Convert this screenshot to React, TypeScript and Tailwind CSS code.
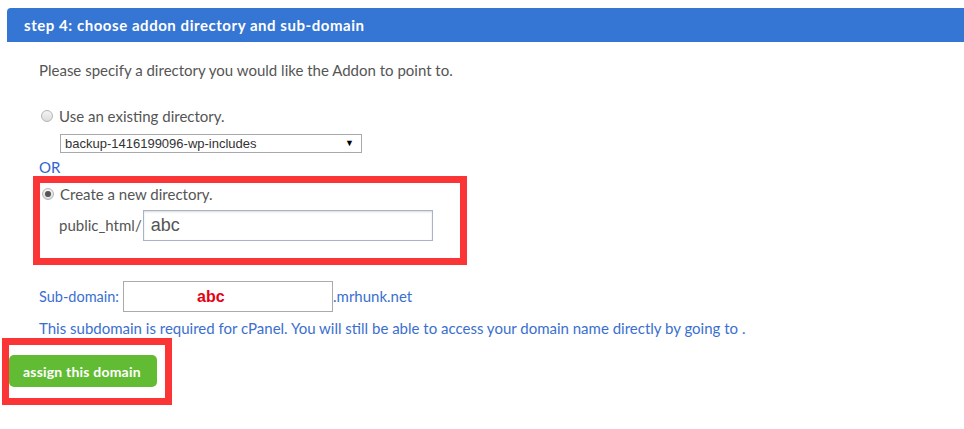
import React from 'react';

const lato = { fontFamily: 'Lato, "Open Sans", sans-serif' };
const arial = { fontFamily: '"Liberation Sans", Arial, sans-serif' };

const Radio: React.FC<{ checked?: boolean }> = ({ checked }) => (
  <span className="inline-flex h-[12px] w-[12px] shrink-0 items-center justify-center rounded-full border border-[#b5b5b5] bg-gradient-to-b from-[#f4f4f4] to-[#dcdcdc]">
    {checked && <span className="h-[6px] w-[6px] rounded-full bg-[#555]" />}
  </span>
);

const App: React.FC = () => {
  return (
    <div className="h-[429px] w-[964px] overflow-hidden bg-white pt-2 text-[15px] text-[#555]" style={lato}>
      <div className="ml-[7px] flex h-[34px] items-center rounded-tl-[4px] bg-[#3575d3] pl-[17px] text-[15px] font-bold tracking-[0.55px] text-white">
        step 4: choose addon directory and sub-domain
      </div>

      <div className="pl-[39px]">
        <p className="mt-[18px] leading-5">Please specify a directory you would like the Addon to point to.</p>

        <div className="mt-[26px] flex items-center gap-[6px] pl-[2px] leading-5">
          <Radio />
          <span>Use an existing directory.</span>
        </div>
        <div className="ml-[21px] mt-[8px] flex h-[19px] w-[302px] items-center justify-between border border-[#a9a9a9] bg-white pl-[4px] pr-[7px] text-[13px] text-[#333]" style={arial}>
          <span>backup-1416199096-wp-includes</span>
          <span className="text-[9px] text-black">▼</span>
        </div>
        <div className="mt-[5px] leading-[18px] text-[#3366cc]">OR</div>

        <div className="ml-[-6px] h-[89px] w-[434px] border-[7px] border-[#fb3535] pl-[2px] pt-[1px]">
          <div className="flex items-center gap-[6px] leading-5">
            <Radio checked />
            <span>Create a new directory.</span>
          </div>
          <div className="mt-[6px] flex items-center pl-[17px]">
            <span>public_html/</span>
            <div className="ml-[1px] flex h-[31px] w-[290px] items-center border border-[#a7b3c8] pl-[7px] text-[18px] text-[#555] shadow-[inset_0_1px_2px_rgba(0,0,0,0.15)]" style={arial}>
              abc
            </div>
          </div>
        </div>

        <div className="mt-[16px] flex items-center text-[#3a6fd0]">
          <span className="w-[84px] text-[14.5px]">Sub-domain:</span>
          <div className="flex h-[31px] w-[210px] items-center border border-[#aaaaaa] pl-[73px] text-[16px] font-bold text-[#e60012]" style={arial}>
            abc
          </div>
          <span>.mrhunk.net</span>
        </div>
        <p className="mt-[6px] leading-5 text-[#3a6fd0]">
          This subdomain is required for cPanel. You will still be able to access your domain name directly by going to .
        </p>
      </div>

      <div className="ml-[2px] h-[67px] w-[170px] border-[7px] border-[#fb3535] pt-[10px]">
        <button className="flex h-[32px] w-[148px] items-center rounded-[5px] bg-[#62bc33] pl-[14px] text-[14px] font-bold tracking-[0.2px] text-white" style={lato}>
          assign this domain
        </button>
      </div>
    </div>
  );
};

export default App;
